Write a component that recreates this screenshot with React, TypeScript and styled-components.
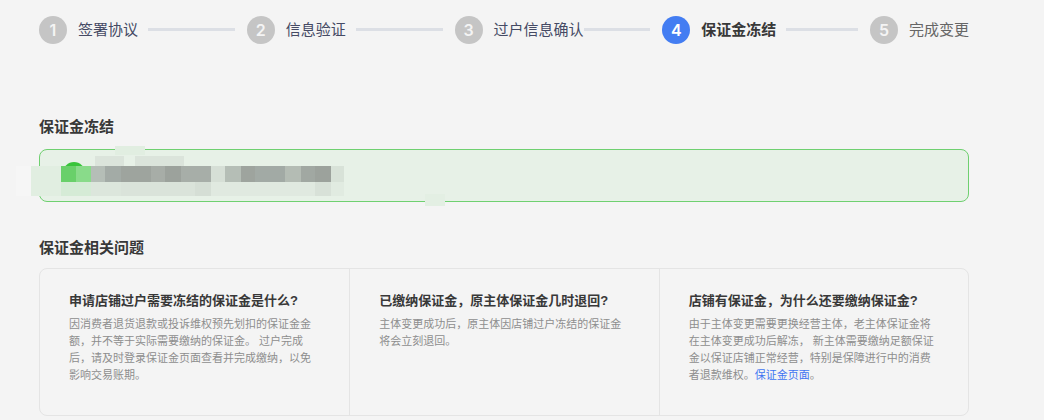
import React from "react";
import styled, { createGlobalStyle } from "styled-components";

const Global = createGlobalStyle`
  * { box-sizing: border-box; }
  body {
    margin: 0;
    background: #f4f4f4;
    color: #383838;
    font-family: "Liberation Sans", "Noto Sans CJK SC", sans-serif;
  }
`;

const Page = styled.main`
  padding: 16px 75px 4px 39px;
`;

const Steps = styled.ol`
  display: flex;
  margin: 0;
  padding: 0;
  list-style: none;
`;

type StepState = "done" | "active" | "waiting";

const Step = styled.li<{ $last: boolean }>`
  display: flex;
  align-items: center;
  flex: ${(p) => (p.$last ? "0 0 auto" : "1 1 0")};
  min-width: 0;
`;

const StepNumber = styled.span<{ $state: StepState }>`
  flex: none;
  width: 28px;
  height: 28px;
  margin-right: 11px;
  border-radius: 50%;
  background: ${(p) => (p.$state === "active" ? "#437df2" : "#c5c5c5")};
  color: ${(p) => (p.$state === "active" ? "#fff" : "#f4f4f4")};
  font: 600 16px/28px Inter, sans-serif;
  text-align: center;
`;

const titleColor = { done: "#454a64", active: "#383838", waiting: "#666" };

const StepTitle = styled.span<{ $state: StepState }>`
  flex: none;
  font-size: 15px;
  line-height: 28px;
  font-weight: ${(p) => (p.$state === "active" ? 700 : 400)};
  color: ${(p) => titleColor[p.$state]};
`;

const Connector = styled.span<{ $tight: boolean }>`
  flex: 1;
  height: 3px;
  margin: 0 12px 1px ${(p) => (p.$tight ? 0 : 10)}px;
  background: #dcdfe5;
`;

const Heading = styled.h2`
  margin: 0;
  font-size: 15px;
  line-height: 24px;
  font-weight: 700;
`;

const Section = styled.section<{ $gap: number }>`
  margin-top: ${(p) => p.$gap}px;
`;

const Notice = styled.div`
  position: relative;
  height: 53px;
  margin-top: 10px;
  border: 1px solid #6fd070;
  border-radius: 8px;
  background: #e7f1e7;
`;

const Mosaic = styled.svg`
  position: absolute;
  left: -24px;
  top: -4px;
  display: block;
`;

const Questions = styled.div`
  display: grid;
  grid-template-columns: repeat(3, 1fr);
  min-height: 148px;
  margin-top: 8px;
  border: 1px solid #e4e4e4;
  border-radius: 8px;
`;

const Question = styled.article`
  padding: 22px 29px;
  & + & { border-left: 1px solid #e4e4e4; }
`;

const QuestionTitle = styled.h3`
  margin: 0 0 5px;
  font-size: 13px;
  line-height: 20px;
  font-weight: 700;
  white-space: nowrap;
`;

const Answer = styled.p`
  margin: 0;
  font-size: 11px;
  line-height: 17px;
  color: #8e8e8e;
`;

const Link = styled.a`
  color: #3f74f2;
  text-decoration: none;
`;

const steps: { title: string; state: StepState }[] = [
  { title: "签署协议", state: "done" },
  { title: "信息验证", state: "done" },
  { title: "过户信息确认", state: "done" },
  { title: "保证金冻结", state: "active" },
  { title: "完成变更", state: "waiting" },
];

// Redaction blocks: x, y, width, height, fill
const blocks: [number, number, number, number, string][] = [
  [0, 20, 15, 30, "#f6f6f6"],
  [15, 20, 30, 30, "#e1eee1"],
  [99, 0, 30, 9, "#e1eee1"],
  [79, 10, 29, 10, "#dbe4db"],
  [119, 10, 49, 10, "#dbe4db"],
  [45, 20, 15, 16, "#69d06a"],
  [60, 20, 15, 16, "#89db8a"],
  [75, 20, 14, 16, "#b5beb7"],
  [89, 20, 16, 16, "#a3aba6"],
  [105, 20, 30, 16, "#9ea49e"],
  [135, 20, 14, 16, "#a7ada7"],
  [149, 20, 16, 16, "#9ca29c"],
  [165, 20, 30, 16, "#a7aea8"],
  [195, 20, 14, 16, "#d6dfd6"],
  [209, 20, 16, 16, "#b5beb6"],
  [225, 20, 14, 16, "#9ea49e"],
  [239, 20, 30, 16, "#a2aaa5"],
  [269, 20, 16, 16, "#b4bcb4"],
  [285, 20, 14, 16, "#a1a8a2"],
  [299, 20, 16, 16, "#9ca29c"],
  [315, 20, 13, 16, "#d8e2d8"],
  [45, 36, 30, 14, "#d5ebd6"],
  [75, 36, 30, 14, "#dce6dc"],
  [105, 36, 74, 14, "#dae3da"],
  [179, 36, 16, 14, "#d5ded5"],
  [195, 36, 104, 14, "#e0e9e0"],
  [299, 36, 16, 14, "#d8e1d8"],
  [315, 36, 13, 14, "#e1ebe1"],
  [409, 48, 20, 12, "#e3efe3"],
];

export default function App() {
  return (
    <>
      <Global />
      <Page>
        <Steps>
          {steps.map(({ title, state }, i) => (
            <Step key={title} $last={i === 4} aria-current={state === "active" ? "step" : undefined}>
              <StepNumber $state={state}>{i + 1}</StepNumber>
              <StepTitle $state={state}>{title}</StepTitle>
              {i < 4 && <Connector $tight={i === 2} />}
            </Step>
          ))}
        </Steps>

        <Section $gap={71}>
          <Heading>保证金冻结</Heading>
          <Notice>
            <Mosaic width="430" height="60" aria-hidden="true">
              <circle cx="58" cy="27" r="11" fill="#38c43a" />
              {blocks.map(([x, y, w, h, fill]) => (
                <rect key={`${x}-${y}`} x={x} y={y} width={w} height={h} fill={fill} />
              ))}
            </Mosaic>
          </Notice>
        </Section>

        <Section $gap={34}>
          <Heading>保证金相关问题</Heading>
          <Questions>
            <Question>
              <QuestionTitle>申请店铺过户需要冻结的保证金是什么?</QuestionTitle>
              <Answer>
                因消费者退货退款或投诉维权预先划扣的保证金金额，并不等于实际需要缴纳的保证金。 过户完成后，请及时登录保证金页面查看并完成缴纳，以免影响交易账期。
              </Answer>
            </Question>
            <Question>
              <QuestionTitle>已缴纳保证金，原主体保证金几时退回?</QuestionTitle>
              <Answer>主体变更成功后，原主体因店铺过户冻结的保证金将会立刻退回。</Answer>
            </Question>
            <Question>
              <QuestionTitle>店铺有保证金，为什么还要缴纳保证金?</QuestionTitle>
              <Answer>
                由于主体变更需要更换经营主体，老主体保证金将在主体变更成功后解冻， 新主体需要缴纳足额保证金以保证店铺正常经营，特别是保障进行中的消费者退款维权。<Link href="#deposit">保证金页面</Link>。
              </Answer>
            </Question>
          </Questions>
        </Section>
      </Page>
    </>
  );
}
